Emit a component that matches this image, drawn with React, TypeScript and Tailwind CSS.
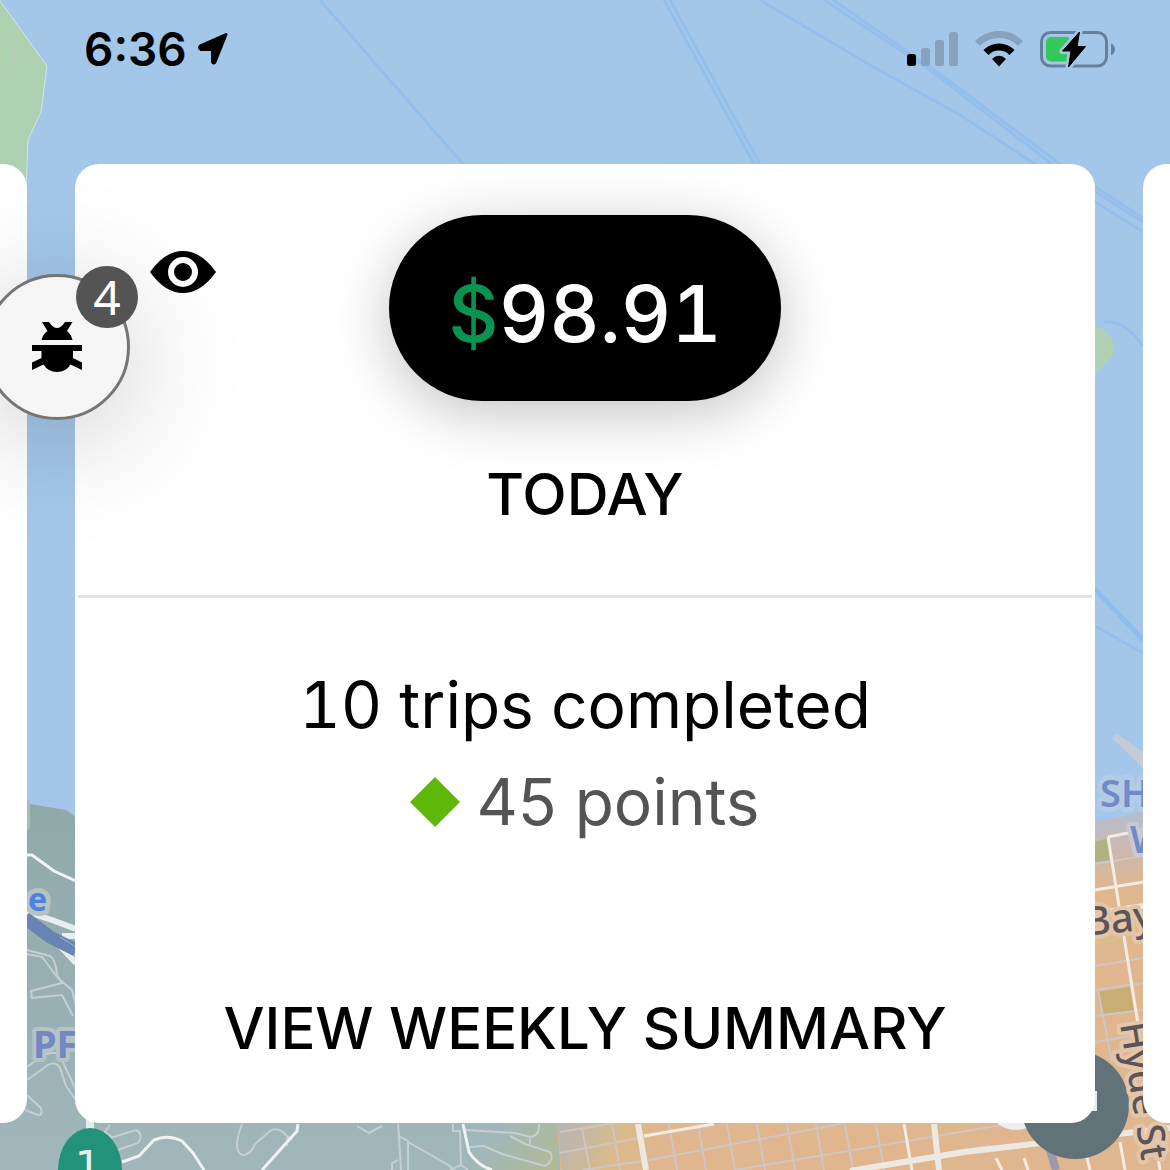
import type { ReactNode } from 'react';

function MapBackground() {
  return (
    <svg
      aria-hidden="true"
      className="absolute inset-0 h-full w-full"
      viewBox="0 0 1170 1170"
      preserveAspectRatio="xMinYMin slice"
    >
      <defs>
        <linearGradient id="hills" x1="0" y1="800" x2="0" y2="1170" gradientUnits="userSpaceOnUse">
          <stop offset="0" stopColor="#8fa9a9" />
          <stop offset="1" stopColor="#a0b6bb" />
        </linearGradient>
        <linearGradient id="wharf" x1="0" y1="815" x2="0" y2="890" gradientUnits="userSpaceOnUse">
          <stop offset="0" stopColor="#b9bccb" />
          <stop offset="1" stopColor="#dfb68e" />
        </linearGradient>
        <linearGradient id="park" x1="500" y1="1120" x2="570" y2="1170" gradientUnits="userSpaceOnUse">
          <stop offset="0" stopColor="#a0b6bb" />
          <stop offset="1" stopColor="#b3bb8e" />
        </linearGradient>
        <linearGradient id="marina" x1="557" y1="1124" x2="650" y2="1170" gradientUnits="userSpaceOnUse">
          <stop offset="0" stopColor="#b5b4b8" />
          <stop offset="0.6" stopColor="#d8bb8a" />
          <stop offset="1" stopColor="#dfb68e" />
        </linearGradient>
      </defs>

      {/* Water, shipping lanes, islands */}
      <rect width="1170" height="1170" fill="#a4c7e9" />
      <path d="M-2 -2L47 66L41 112L28 140L26 190H-2Z" fill="#aed1b2" stroke="#d3e6e4" />
      <path d="M0 34L12 46Q18 56 12 70L0 86" fill="none" stroke="#b7cbb9" strokeWidth="2" />
      <g fill="none" stroke="#94bfec" strokeWidth="3">
        <path d="M320 0L463 164M664 0L754 164M670 0L760 164" />
        <path d="M824 0L930 70L1052 164L1143 222M833 0L940 74L1060 164L1143 218" />
        <path d="M760 0L870 65L960 115L1035 164L1143 232" />
        <path d="M1104 322Q1125 320 1143 346M1095 626L1143 653" />
      </g>
      <path d="M1095 589L1143 640" stroke="#8fbcec" strokeWidth="5" />
      <path d="M1095 325L1104 330L1114 342V354L1095 374Z" fill="#aed1b2" />

      {/* Hills on the west side */}
      <path d="M0 798L30 804L66 810L76 817V1100H560V1170H0Z" fill="url(#hills)" />
      <rect x="470" y="1110" width="88" height="60" fill="url(#park)" />
      <rect x="20" y="800" width="10" height="30" rx="3" fill="#a9baba" />
      <path d="M20 855H32L54 871L76 881" fill="none" stroke="#f1f4f4" strokeWidth="3" />
      <path d="M27 912L52 920L76 929M42 928L62 948L76 963M62 936H78" fill="none" stroke="#e8edee" strokeWidth="6" />
      <path d="M25 918L50 937L76 950" fill="none" stroke="#6884b3" strokeWidth="13" />
      <path d="M60 937L76 947" stroke="#a5b5d0" strokeWidth="1" />
      <g fill="none" stroke="#c5cfd1" strokeWidth="2">
        <path d="M27 950L50 956Q56 960 57 975L62 983L31 991L32 998L62 995L73 1016" />
        <path d="M27 954L42 957L58 978L72 990L76 1006" />
        <path d="M27 1080L48 1065Q56 1061 60 1068L66 1086L76 1100" />
        <path d="M27 1067L44 1055Q56 1050 60 1056L76 1090" />
        <path d="M27 1095L41 1108Q43 1116 38 1115L25 1110" />
        <path d="M100 1138L110 1125M110 1138L136 1130Q144 1134 138 1143L112 1152M105 1132L112 1137" />
        <path d="M242 1124Q232 1150 242 1155Q250 1156 255 1144L270 1131Q278 1126 287 1136L292 1140M287 1137V1146" />
        <path d="M357 1126L369 1133L382 1126M398 1124L399 1136L408 1141V1170M399 1136L401 1170M392 1170V1163L398 1160M408 1142L450 1166L453 1170M453 1124V1131H460L461 1165L450 1170M461 1165L468 1170" />
        <path d="M466 1130L515 1133L530 1137Q540 1136 539 1124M530 1137V1146M470 1147L484 1146L502 1154L545 1166Q555 1160 550 1152L525 1144L510 1136" />
      </g>
      <path
        d="M122 1162L139 1156L154 1140Q168 1134 182 1141L193 1153L204 1170M262 1170L297 1131L298 1124M463 1124L469 1152Q478 1166 492 1170"
        fill="none"
        stroke="#eef2f2"
        strokeWidth="3"
      />

      {/* City grid on the east side */}
      <path d="M1095 822L1143 812H1170V1170H560L557 1120H1095Z" fill="url(#wharf)" />
      <path d="M557 1120H660V1170H562Z" fill="url(#marina)" />
      <path d="M1112 738L1117 734L1143 752V768Z" fill="#c6cad7" />
      <path d="M1095 842L1108 838L1110 860L1095 862Z" fill="#afb384" />
      <path d="M1095 915H1122V940L1095 944Z" fill="#d8bf86" />
      <path d="M1099 992L1130 987L1134 1011L1102 1015Z" fill="#c9ae74" />
      <g fill="none" stroke="#d1c5c3" strokeWidth="2">
        <path d="M1095 864L1143 856M1095 966L1143 958M1095 990L1143 983M1095 1016L1143 1010M1095 1042L1143 1034" />
        <path d="M1098 990L1112 1062M560 1132L620 1122M560 1153L650 1136M582 1170L650 1160L850 1122M735 1170L1020 1122M866 1170L990 1145" />
        <path d="M582 1128L590 1170M612 1124L620 1170M669 1124L677 1170M698 1124L706 1170M727 1124L735 1170M757 1124L765 1170M787 1124L795 1170M816 1124L824 1170M845 1124L853 1170M876 1124L884 1170" />
      </g>
      <path
        d="M1108 837L1138 1024M1108 837L1143 830M1095 890L1143 882M644 1136L714 1124M904 1124L912 1170M1085 1150L1090 1170M996 1158L1002 1170M1024 1158L1028 1170M1120 1142L1125 1170M1153 1124L1160 1170"
        fill="none"
        stroke="#f3ebe4"
        strokeWidth="3"
      />
      <path
        d="M638 1124L646 1170M850 1171L964 1152L1170 1128M934 1124L939 1170M1095 914L1143 906"
        fill="none"
        stroke="#eee8e3"
        strokeWidth="6"
      />
      <path d="M1050 1150L1056 1170" stroke="#9b99ab" strokeWidth="8" />

      {/* Place labels */}
      <g fontFamily="'Noto Sans', sans-serif" strokeLinejoin="round" paintOrder="stroke">
        <text x="28" y="911" fontSize="32" fontWeight="700" fill="#4e82e0" stroke="#b5c3c4" strokeWidth="10">
          e
        </text>
        <text x="33" y="1058" fontSize="38" fontWeight="700" fill="#7288c4" stroke="#b5c3c4" strokeWidth="8">
          PF
        </text>
        <text x="1100" y="807" fontSize="38" fontWeight="600" fill="#728ac8" stroke="#b3cbe6" strokeWidth="10">
          SH
        </text>
        <text x="1130" y="853" fontSize="38" fontWeight="600" fill="#728ac8" stroke="#c8c9d4" strokeWidth="8">
          W
        </text>
        <text x="1086" y="936" fontSize="40" fontWeight="500" fill="#5b5559" stroke="#e3c6aa" strokeWidth="8" transform="rotate(-6 1086 936)">
          Bay
        </text>
      </g>

      {/* Pins */}
      <rect x="86" y="1112" width="8" height="30" fill="#e6ebeb" />
      <ellipse cx="90" cy="1170" rx="32" ry="42" fill="#24927a" />
      <text x="88" y="1181" fontSize="42" textAnchor="middle" fill="#e9eeee" fontFamily="'DejaVu Sans', sans-serif">
        1
      </text>
      <circle cx="1016" cy="1100" r="30" fill="#eeeeee" />
      <circle cx="1075" cy="1105" r="54" fill="#617278" />
      <rect x="1085" y="1091" width="12" height="20" fill="#e6ebeb" />
      <text
        fontFamily="'Noto Sans', sans-serif"
        fontSize="38"
        fontWeight="500"
        fill="#5b5559"
        stroke="#e3c6aa"
        strokeWidth="8"
        strokeLinejoin="round"
        paintOrder="stroke"
        transform="translate(1120 1024) rotate(81)"
      >
        Hyde St
      </text>
    </svg>
  );
}

function StatusBar() {
  return (
    <header className="relative flex h-[98px] items-center justify-between pl-[84px] pr-[55px]">
      <div className="flex items-center gap-2.5">
        <time className="text-[46px] leading-none font-semibold">6:36</time>
        <svg aria-label="Location in use" width="32" height="34" viewBox="0 0 32 34">
          <path d="M4 13.500L29 2.500L18 30Q16.500 32 15.500 30V17.500H4Q1 15.500 4 13.500Z" stroke="#000" strokeWidth="3" strokeLinejoin="round" />
        </svg>
      </div>
      <div className="flex items-center gap-[17px]">
        <svg aria-label="Signal" width="51" height="34" viewBox="0 0 51 34" fill="#86a2bd">
          <rect y="22" width="9" height="12" rx="2.5" fill="#000" />
          <rect x="14" y="16" width="9" height="18" rx="2.5" />
          <rect x="28" y="8" width="9" height="26" rx="2.5" />
          <rect x="42" width="9" height="34" rx="2.5" />
        </svg>
        <svg aria-label="Wi-Fi" width="48" height="36" viewBox="0 0 48 36" fill="none" strokeWidth="7">
          <path d="M2.500 12.500A30 30 0 0 1 45.500 12.500" stroke="#86a2bd" />
          <path d="M11 21.500A18 18 0 0 1 37 21.500" stroke="#000" />
          <path d="M17 28Q24 21.500 31 28L24 35.500Z" fill="#000" />
        </svg>
        <svg aria-label="Battery charging" width="75" height="37" viewBox="0 0 75 37">
          <rect x="1.5" y="1.500" width="65" height="33.500" rx="9" fill="none" stroke="#66809b" strokeWidth="3" />
          <rect x="6" y="6" width="25" height="24.500" rx="5" fill="#34c759" />
          <path d="M71 12.500Q75 14.500 75 18.300T71 24.500Z" fill="#66809b" />
          <path
            d="M39.500 1L22.500 20H31L28.500 36L45.500 15.500H37Z"
            stroke="#a4c7e9"
            strokeWidth="6"
            strokeLinejoin="round"
            paintOrder="stroke"
          />
          <path d="M39.500 1L22.500 20H31L28.500 36L45.500 15.500H37Z" stroke="#000" strokeLinejoin="round" />
        </svg>
      </div>
    </header>
  );
}

function BugButton() {
  return (
    <button
      type="button"
      aria-label="Report a bug, 4 new"
      className="absolute top-[274px] -left-4 flex size-[146px] items-center justify-center rounded-full border-3 border-[#757575] bg-[#f5f5f5] shadow-[0_16px_120px_rgba(0,0,0,0.22)]"
    >
      <svg width="50" height="50" viewBox="0 0 50 50">
        <path d="M10 0H17Q21 6 25 6T33 0H40.500L35 9Q39 12 40.500 18H9.500Q11 12 15.500 9Z" />
        <path d="M0 23H50V29H41V36L50 40.500V48L38.500 42.500Q34 50 25 50T11.500 42.500L0 48V40.500L9.500 36V29H0Z" />
      </svg>
      <span className="absolute -top-[11px] right-[-11px] flex size-[62px] items-center justify-center rounded-full bg-[#545454] font-['Noto_Sans',sans-serif] text-5xl leading-none text-white">
        4
      </span>
    </button>
  );
}

function Card({ children }: { children: ReactNode }) {
  return <section className="relative flex min-w-0 flex-1 flex-col items-center rounded-3xl bg-white">{children}</section>;
}

export default function App() {
  return (
    <div className="relative flex min-h-screen flex-col overflow-hidden font-['Inter',sans-serif] text-black">
      <MapBackground />
      <StatusBar />

      <main className="relative flex flex-1 gap-12 pt-[66px] pb-[47px]">
        {/* Edge of the previous card */}
        <div className="w-[27px] shrink-0 rounded-r-3xl bg-white" />

        <Card>
          <button type="button" aria-label="Hide earnings" className="absolute top-[87px] left-[75px]">
            <svg width="66" height="42" viewBox="0 0 66 42">
              <path d="M0 21Q15 0 33 0T66 21Q51 42 33 42T0 21Z" />
              <circle cx="33" cy="21" r="12" fill="none" stroke="#fff" strokeWidth="6" />
            </svg>
          </button>

          <button
            type="button"
            className="mt-[51px] flex h-[186px] w-[392px] items-center justify-center rounded-full bg-black pt-3 text-[78px] leading-none font-medium text-white tabular-nums shadow-[0_12px_60px_rgba(0,0,0,0.24)]"
          >
            <span className="text-[#099250]">$</span>98.91
          </button>
          <h1 className="mt-[61px] text-[58px] leading-[64px] font-medium">TODAY</h1>

          <hr className="mt-[69px] w-[calc(100%-6px)] border-t-3 border-[#e2e2e2]" />

          <p className="mt-[67px] text-[64px] leading-[80px] tabular-nums">10 trips completed</p>
          <p className="mt-[17px] flex items-center gap-4 text-[64px] leading-[80px] text-[#545454]">
            <svg aria-hidden="true" width="50" height="50" viewBox="0 0 50 50">
              <path d="M25 0L50 25L25 50L0 25Z" fill="#5fb709" />
            </svg>
            45 points
          </p>

          <button type="button" className="mt-auto mb-[63px] text-[58px] leading-[64px] font-medium">
            VIEW WEEKLY SUMMARY
          </button>
        </Card>

        {/* Edge of the next card */}
        <div className="w-[27px] shrink-0 rounded-l-3xl bg-white" />
      </main>

      <BugButton />
    </div>
  );
}
